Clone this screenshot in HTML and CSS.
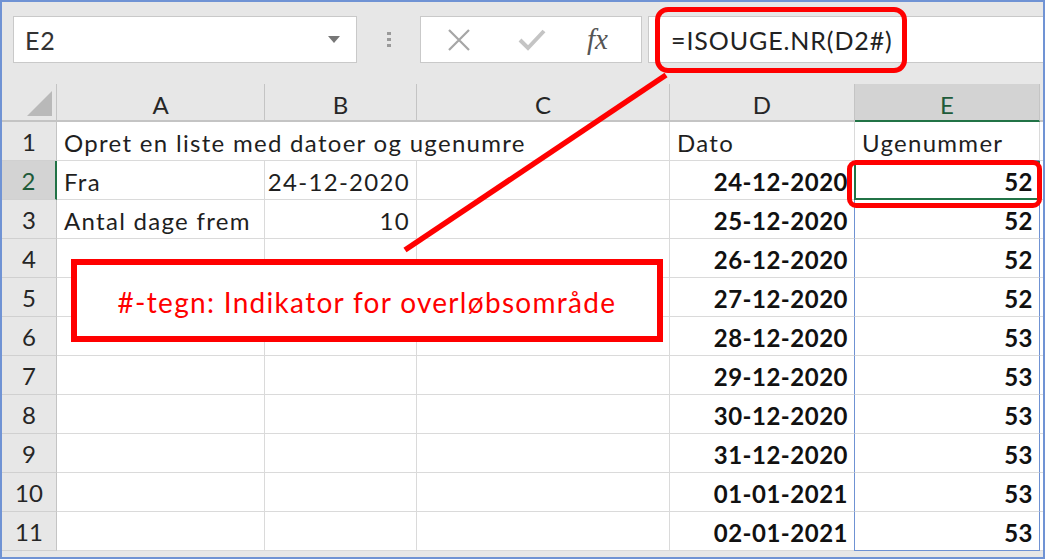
FILE: index.html
```html
<!DOCTYPE html>
<html lang="da">
<head>
    <meta charset="UTF-8">
    <title>ISOUGE.NR - overløbsområde</title>
    <link rel="stylesheet" href="styles.css">
</head>
<body>
    <div class="frame">
        <div class="toolbar">
            <div class="namebox">
                <span>E2</span>
                <span class="caret"></span>
            </div>
            <div class="grip"><i></i><i></i><i></i></div>
            <div class="fxbox">
                <svg class="ico" width="28" height="28" viewBox="0 0 28 28">
                    <path d="M4 4 L24 24 M24 4 L4 24" stroke="#a6a6a6" stroke-width="2.2" fill="none"/>
                </svg>
                <svg class="ico" width="30" height="26" viewBox="0 0 30 26">
                    <path d="M3 13 L11 21 L27 4" stroke="#c4c4c4" stroke-width="4" fill="none"/>
                </svg>
                <span class="fx">fx</span>
            </div>
            <div class="formula">=ISOUGE.NR(D2#)</div>
        </div>

        <div class="sheet">
            <div class="corner"><span></span></div>
            <div class="colhead">A</div>
            <div class="colhead">B</div>
            <div class="colhead">C</div>
            <div class="colhead">D</div>
            <div class="colhead active">E</div>
            <div class="colhead"></div>

            <div class="rowhead">1</div>
            <div class="cell span3">Opret en liste med datoer og ugenumre</div>
            <div class="cell">Dato</div>
            <div class="cell spill-top">Ugenummer</div>
            <div class="cell"></div>

            <div class="rowhead active">2</div>
            <div class="cell">Fra</div>
            <div class="cell num">24-12-2020</div>
            <div class="cell"></div>
            <div class="cell num bold">24-12-2020</div>
            <div class="cell num bold spill current">52</div>
            <div class="cell"></div>

            <div class="rowhead">3</div>
            <div class="cell">Antal dage frem</div>
            <div class="cell num">10</div>
            <div class="cell"></div>
            <div class="cell num bold">25-12-2020</div>
            <div class="cell num bold spill">52</div>
            <div class="cell"></div>

            <div class="rowhead">4</div>
            <div class="cell"></div>
            <div class="cell"></div>
            <div class="cell"></div>
            <div class="cell num bold">26-12-2020</div>
            <div class="cell num bold spill">52</div>
            <div class="cell"></div>

            <div class="rowhead">5</div>
            <div class="cell"></div>
            <div class="cell"></div>
            <div class="cell"></div>
            <div class="cell num bold">27-12-2020</div>
            <div class="cell num bold spill">52</div>
            <div class="cell"></div>

            <div class="rowhead">6</div>
            <div class="cell"></div>
            <div class="cell"></div>
            <div class="cell"></div>
            <div class="cell num bold">28-12-2020</div>
            <div class="cell num bold spill">53</div>
            <div class="cell"></div>

            <div class="rowhead">7</div>
            <div class="cell"></div>
            <div class="cell"></div>
            <div class="cell"></div>
            <div class="cell num bold">29-12-2020</div>
            <div class="cell num bold spill">53</div>
            <div class="cell"></div>

            <div class="rowhead">8</div>
            <div class="cell"></div>
            <div class="cell"></div>
            <div class="cell"></div>
            <div class="cell num bold">30-12-2020</div>
            <div class="cell num bold spill">53</div>
            <div class="cell"></div>

            <div class="rowhead">9</div>
            <div class="cell"></div>
            <div class="cell"></div>
            <div class="cell"></div>
            <div class="cell num bold">31-12-2020</div>
            <div class="cell num bold spill">53</div>
            <div class="cell"></div>

            <div class="rowhead">10</div>
            <div class="cell"></div>
            <div class="cell"></div>
            <div class="cell"></div>
            <div class="cell num bold">01-01-2021</div>
            <div class="cell num bold spill">53</div>
            <div class="cell"></div>

            <div class="rowhead">11</div>
            <div class="cell"></div>
            <div class="cell"></div>
            <div class="cell"></div>
            <div class="cell num bold">02-01-2021</div>
            <div class="cell num bold spill spill-end">53</div>
            <div class="cell"></div>
        </div>

        <!-- annotations drawn on top of the sheet -->
        <svg class="pointer" width="1045" height="559">
            <line x1="666" y1="75" x2="405" y2="250" stroke="#ff0000" stroke-width="5.5"/>
        </svg>
        <div class="mark mark-formula"></div>
        <div class="mark mark-cell"></div>
        <div class="note">#-tegn: Indikator for overløbsområde</div>
    </div>
</body>
</html>
```

FILE: styles.css
```css
body {
    margin: 0;
    padding: 0;
    background: #ffffff;
    font-family: Lato, "Open Sans", sans-serif;
    color: #1f1f1f;
}
.frame {
    position: relative;
    width: 1045px;
    height: 559px;
    box-sizing: border-box;
    border: 2px solid #7093d4;
    background-color: #e7e7e7;
    overflow: hidden;
}

/* formula bar */
.toolbar {
    display: flex;
    align-items: flex-start;
    height: 82px;
    padding: 14px 0 0 11px;
    box-sizing: border-box;
}
.namebox {
    display: flex;
    align-items: center;
    justify-content: space-between;
    width: 344px;
    height: 47px;
    box-sizing: border-box;
    padding: 0 16px 0 11px;
    background: #fff;
    border: 1px solid #c9c9c9;
    font-size: 25px;
    letter-spacing: 0.8px;
    color: #333;
}
.caret {
    width: 0;
    height: 0;
    border-left: 6px solid transparent;
    border-right: 6px solid transparent;
    border-top: 7px solid #777;
}
.grip {
    width: 63px;
    height: 47px;
    display: flex;
    flex-direction: column;
    align-items: center;
    justify-content: center;
    gap: 3px;
}
.grip i {
    display: block;
    width: 4px;
    height: 3px;
    background: #9a9a9a;
}
.fxbox {
    display: flex;
    align-items: center;
    width: 222px;
    height: 47px;
    box-sizing: border-box;
    padding-left: 24px;
    background: #fff;
    border: 1px solid #c9c9c9;
}
.fxbox .ico {
    margin-right: 44px;
}
.fxbox .fx {
    font-family: "Liberation Serif", serif;
    font-style: italic;
    font-size: 29px;
    color: #555;
    margin-left: -4px;
}
.formula {
    flex: 1;
    height: 47px;
    margin-left: 6px;
    box-sizing: border-box;
    padding-left: 22px;
    display: flex;
    align-items: center;
    background: #fff;
    border: 1px solid #c9c9c9;
    border-right: none;
    font-size: 25px;
    letter-spacing: 0.9px;
    color: #222;
}

/* worksheet grid */
.sheet {
    display: grid;
    grid-template-columns: 55px 208px 152px 253px 185px 185px 1fr;
    grid-template-rows: 38px repeat(11, 39px);
    background: #fff;
    font-size: 24px;
}
.corner {
    background: #e7e7e7;
    border-right: 1px solid #c4c4c4;
    border-bottom: 2px solid #c4c4c4;
    position: relative;
}
.corner span {
    position: absolute;
    right: 4px;
    bottom: 4px;
    width: 25px;
    height: 25px;
    background: #b9b9b9;
    clip-path: polygon(100% 0, 100% 100%, 0 100%);
}
.colhead {
    display: flex;
    align-items: center;
    justify-content: center;
    padding-top: 4px;
    box-sizing: border-box;
    background: #e7e7e7;
    border-right: 1px solid #c4c4c4;
    border-bottom: 2px solid #c4c4c4;
    color: #262626;
}
.colhead.active {
    background: #d3d3d3;
    border-bottom: 2px solid #217346;
    color: #1e5b3a;
}
.rowhead {
    display: flex;
    align-items: flex-end;
    justify-content: center;
    padding-bottom: 4px;
    box-sizing: border-box;
    background: #e7e7e7;
    border-right: 1px solid #c4c4c4;
    border-bottom: 1px solid #d0d0d0;
    color: #262626;
}
.rowhead.active {
    background: #d3d3d3;
    border-right: 2px solid #217346;
    color: #1e5b3a;
}
.cell {
    display: flex;
    align-items: flex-end;
    padding: 0 6px 3px 7px;
    box-sizing: border-box;
    border-right: 1px solid #dadada;
    border-bottom: 1px solid #dadada;
    white-space: nowrap;
    letter-spacing: 1.3px;
    color: #1f1f1f;
}
.span3 {
    grid-column: span 3;
}
.num {
    justify-content: flex-end;
}
.bold {
    font-weight: bold;
    letter-spacing: 0.5px;
    color: #111;
}
.spill {
    border-left: 1px solid #6f92d3;
    border-right: 1px solid #6f92d3;
    margin-left: -1px;
}
.spill-top {
    border-bottom: 1px solid #6f92d3;
}
.spill-end {
    border-bottom: 1px solid #6f92d3;
}
.current {
    outline: 2px solid #217346;
    outline-offset: -2px;
}

/* red annotations */
.pointer {
    position: absolute;
    left: -2px;
    top: -2px;
    pointer-events: none;
}
.mark {
    position: absolute;
    border: 5px solid #ff0000;
    box-sizing: border-box;
}
.mark-formula {
    left: 653px;
    top: 5px;
    width: 252px;
    height: 66px;
    border-radius: 13px;
}
.mark-cell {
    left: 845px;
    top: 158px;
    width: 195px;
    height: 48px;
    border-radius: 9px;
}
.note {
    position: absolute;
    left: 69px;
    top: 257px;
    width: 592px;
    height: 83px;
    box-sizing: border-box;
    border: 6px solid #ff0000;
    background: #fff;
    display: flex;
    align-items: center;
    justify-content: center;
    padding-top: 2px;
    font-size: 28px;
    letter-spacing: 1.3px;
    color: #ff0000;
}
```
